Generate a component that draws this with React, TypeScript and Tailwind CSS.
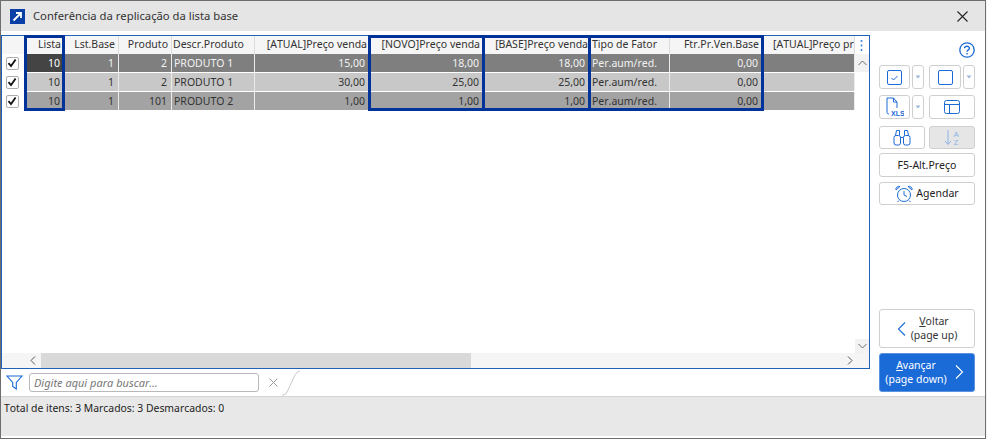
import React from "react";

const widths = "grid-cols-[23px_40px_54px_53px_83px_115px_114px_106px_80px_93px_92px]";

const headers: [string, string][] = [
  ["", ""],
  ["Lista", "justify-end pr-[3px]"],
  ["Lst.Base", "justify-end pr-[3px]"],
  ["Produto", "justify-end pr-[3px]"],
  ["Descr.Produto", "justify-start pl-[1px]"],
  ["[ATUAL]Preço venda", "justify-end pr-[2px]"],
  ["[NOVO]Preço venda", "justify-end pr-[3px]"],
  ["[BASE]Preço venda", "justify-end pr-[1px]"],
  ["Tipo de Fator", "justify-start pl-[2px]"],
  ["Ftr.Pr.Ven.Base", "justify-end pr-[3px]"],
  ["[ATUAL]Preço pr", "justify-start pl-[10px]"],
];

const rows = [
  { mt: "", bg: "bg-[#7f7f7f]", text: "text-[#f2f2f2]", v: ["10", "1", "2", "PRODUTO 1", "15,00", "18,00", "18,00", "Per.aum/red.", "0,00", ""] },
  { mt: "mt-[1px]", bg: "bg-[#c8c8c8]", text: "text-[#333333]", v: ["10", "1", "2", "PRODUTO 1", "30,00", "25,00", "25,00", "Per.aum/red.", "0,00", ""] },
  { mt: "mt-[1px]", bg: "bg-[#a3a3a3]", text: "text-[#333333]", v: ["10", "1", "101", "PRODUTO 2", "1,00", "1,00", "1,00", "Per.aum/red.", "0,00", ""] },
];

function Check() {
  return (
    <div className="w-[13px] h-[13px] rounded-[2px] border border-[#adadad] bg-white flex items-center justify-center">
      <svg width="10" height="10" viewBox="0 0 10 10" fill="none">
        <path d="M1.5 5.2 L4 8 L8.6 1.4" stroke="#111" strokeWidth="1.8" />
      </svg>
    </div>
  );
}

function Btn({ children, className = "" }: { children?: React.ReactNode; className?: string }) {
  return (
    <div className={"rounded-[3px] border border-[#cfcfcf] flex items-center justify-center " + className}>{children}</div>
  );
}

function Caret() {
  return (
    <Btn className="w-[12px] h-full">
      <svg width="6" height="4" viewBox="0 0 6 4"><path d="M0.5 0.5 L5.5 0.5 L3 3.5 Z" fill="#9db7d8" /></svg>
    </Btn>
  );
}

function Mark({ className }: { className: string }) {
  return <div className={"absolute border-[3px] border-[#003399] pointer-events-none " + className} />;
}

const blue = "#1a6ad8";

export default function App() {
  return (
    <div className="w-[987px] h-[439px] bg-[#f4f4f4] overflow-hidden font-['Noto_Sans',sans-serif] [font-kerning:none] text-[10.5px] leading-none text-[#333]">
      <div className="w-[986px] h-[439px] border border-[#6e6e6e] bg-white flex flex-col">
        {/* title bar */}
        <div className="h-[30px] bg-[#e5e5e5] flex items-center pl-[9px] pr-[17px] shrink-0">
          <div className="w-[15px] h-[15px] bg-[#0b3fa8] flex items-center justify-center">
            <svg width="11" height="11" viewBox="0 0 11 11" fill="none">
              <path d="M1.5 9.5 L8 3 M4 2 H9 V7" stroke="white" strokeWidth="1.8" />
            </svg>
          </div>
          <span className="ml-[8px] text-[11.25px] text-[#333]">Conferência da replicação da lista base</span>
          <svg className="ml-auto" width="11" height="11" viewBox="0 0 11 11" fill="none">
            <path d="M0.5 0.5 L10.5 10.5 M10.5 0.5 L0.5 10.5" stroke="#222" strokeWidth="1.1" />
          </svg>
        </div>

        {/* body */}
        <div className="flex-1 flex min-h-0 pt-[4px] relative">
          {/* left column */}
          <div className="w-[869px] shrink-0 flex flex-col">
            {/* grid */}
            <div className="h-[334px] border border-[#1f62b8] flex flex-col relative">
              <div className="flex-1 flex min-h-0">
                <div className="w-[853px] shrink-0 flex flex-col">
                  <div className={"grid h-[18px] " + widths}>
                    {headers.map(([label, align], i) => (
                      <div key={i} className={"bg-[#f5f5f5] border-r border-[#dcdcdc] flex items-center whitespace-nowrap overflow-hidden pb-[1px] " + align}>
                        {label}
                      </div>
                    ))}
                  </div>
                  {rows.map((r, ri) => (
                    <div key={ri} className={"grid h-[18px] " + r.mt + " " + widths}>
                      <div className="bg-white flex items-center justify-center pr-[3px]">
                        <Check />
                      </div>
                      {r.v.map((val, ci) => {
                        const leftAlign = ci === 3 || ci === 7 || ci === 9;
                        return (
                          <div
                            key={ci}
                            className={
                              "border-r border-[#ececec] flex items-center whitespace-nowrap overflow-hidden " +
                              (leftAlign ? "justify-start pl-[2px] " : "justify-end pr-[4px] ") +
                              (ri === 0 && ci === 0 ? "bg-[#444444] text-white " : r.bg + " " + r.text + " ")
                            }
                          >
                            {val}
                          </div>
                        );
                      })}
                    </div>
                  ))}
                </div>
                {/* vertical scrollbar */}
                <div className="flex-1 flex flex-col items-center">
                  <div className="h-[18px] w-full flex items-center justify-center pr-[1px]">
                    <svg width="3" height="11" viewBox="0 0 3 11"><path d="M1.5 0v2M1.5 4.5v2M1.5 9v2" stroke="#3d85e0" strokeWidth="1.6" /></svg>
                  </div>
                  <div className="w-full h-[18px] bg-[#f2f2f2] flex items-center justify-center">
                    <svg width="9" height="6" viewBox="0 0 9 6" fill="none"><path d="M0.5 5 L4.5 1 L8.5 5" stroke="#6d6d6d" /></svg>
                  </div>
                  <div className="flex-1 w-full bg-white" />
                  <div className="w-full h-[14px] bg-[#f2f2f2] flex items-center justify-center">
                    <svg width="9" height="6" viewBox="0 0 9 6" fill="none"><path d="M0.5 1 L4.5 5 L8.5 1" stroke="#6d6d6d" /></svg>
                  </div>
                </div>
              </div>
              {/* horizontal scrollbar */}
              <div className="h-[15px] bg-[#f5f5f5] flex items-center shrink-0">
                <div className="w-[39px] h-full flex items-center justify-end pr-[5px]">
                  <svg width="6" height="9" viewBox="0 0 6 9" fill="none"><path d="M5 0.5 L1 4.5 L5 8.5" stroke="#555" /></svg>
                </div>
                <div className="w-[430px] h-full bg-[#d9d9d9]" />
                <div className="flex-1" />
                <div className="w-[24px] flex items-center pl-[2px]">
                  <svg width="6" height="9" viewBox="0 0 6 9" fill="none"><path d="M1 0.5 L5 4.5 L1 8.5" stroke="#555" /></svg>
                </div>
              </div>
            </div>
            {/* search */}
            <div className="h-[27px] flex items-center pl-[5px] relative">
              <svg width="17" height="15" viewBox="0 0 17 15" fill="none">
                <path d="M1 1 H16 L10.3 7.5 V14 L6.7 11.5 V7.5 Z" stroke={blue} strokeWidth="1.1" />
              </svg>
              <div className="ml-[6px] w-[230px] h-[19px] rounded-[3px] border border-[#b9b9b9] flex items-center pl-[4px] italic text-[11px] text-[#777]">
                Digite aqui para buscar…
              </div>
              <svg className="ml-[10px]" width="9" height="9" viewBox="0 0 9 9" fill="none">
                <path d="M0.5 0.5 L8.5 8.5 M8.5 0.5 L0.5 8.5" stroke="#9a9a9a" />
              </svg>
              <svg className="ml-[4px]" width="18" height="26" viewBox="0 0 18 26" fill="none">
                <path d="M0 25 H1 Q4 25 5.5 21 L13 5 Q15 1 18 1" stroke="#c8c8c8" />
              </svg>
            </div>
          </div>

          {/* right column */}
          <div className="flex-1 flex flex-col pl-[9px] pr-[10px]">
            <div className="h-[30px] shrink-0 flex justify-end items-start pt-[7px]">
              <svg width="16" height="16" viewBox="0 0 16 16" fill="none" stroke={blue}>
                <circle cx="8" cy="8" r="7.2" strokeWidth="1.3" />
                <path d="M5.6 6.2 C5.6 3.6 10.4 3.6 10.4 6.2 C10.4 8 8 7.8 8 9.8" strokeWidth="1.4" />
                <path d="M8 11 V12.6" strokeWidth="1.4" />
              </svg>
            </div>
            <div className="flex h-[24px] gap-[2px]">
              <Btn className="w-[31px]">
                <svg width="15" height="15" viewBox="0 0 15 15" fill="none">
                  <rect x="0.5" y="0.5" width="14" height="14" rx="1.5" stroke={blue} />
                  <path d="M4.5 8 L6.5 10 L10.5 6" stroke={blue} />
                </svg>
              </Btn>
              <Caret />
              <Btn className="w-[32px] ml-[3px]">
                <svg width="15" height="15" viewBox="0 0 15 15" fill="none"><rect x="0.5" y="0.5" width="14" height="14" rx="1.5" stroke={blue} /></svg>
              </Btn>
              <Caret />
            </div>
            <div className="flex h-[24px] gap-[2px] mt-[6px]">
              <Btn className="w-[31px]">
                <svg width="18" height="20" viewBox="0 0 18 20" fill="none">
                  <path d="M1 14 V1 H7.5 L11 5 V11" stroke={blue} />
                  <path d="M7.5 1 V5 H11" stroke={blue} />
                  <path d="M1 14 V15.5 Q1 17 3 17" stroke={blue} />
                  <text x="5" y="19" fontSize="7" fontWeight="700" fill={blue} fontFamily="'Liberation Sans',sans-serif">XLS</text>
                </svg>
              </Btn>
              <Caret />
              <Btn className="flex-1 ml-[3px]">
                <svg width="16" height="14" viewBox="0 0 16 14" fill="none">
                  <rect x="0.5" y="0.5" width="15" height="13" rx="2" stroke={blue} />
                  <path d="M0.5 4.5 H15.5 M5.5 4.5 V13.5" stroke={blue} />
                </svg>
              </Btn>
            </div>
            <div className="flex h-[23px] gap-[4px] mt-[7px]">
              <Btn className="flex-1">
                <svg width="18" height="17" viewBox="0 0 18 17" fill="none" stroke={blue}>
                  <rect x="1" y="6.5" width="6.5" height="9.5" rx="2" />
                  <rect x="10.5" y="6.5" width="6.5" height="9.5" rx="2" />
                  <path d="M2.5 6.5 L3.5 1.5 H6.5 V6.5 M15.5 6.5 L14.5 1.5 H11.5 V6.5 M7.5 8.5 H10.5" />
                </svg>
              </Btn>
              <Btn className="flex-1 bg-[#e6e6e6]">
                <svg width="17" height="17" viewBox="0 0 17 17" fill="none">
                  <path d="M4 1 V15 M1 12 L4 15.5 L7 12" stroke="#8fb4e6" />
                  <text x="9.5" y="7.5" fontSize="8" fill="#8fb4e6" fontFamily="'Liberation Sans',sans-serif">A</text>
                  <text x="9.5" y="16" fontSize="8" fill="#8fb4e6" fontFamily="'Liberation Sans',sans-serif">Z</text>
                </svg>
              </Btn>
            </div>
            <Btn className="h-[24px] mt-[4px] text-[#222]">F5-Alt.Preço</Btn>
            <Btn className="h-[23px] mt-[5px] gap-[3px] text-[#222]">
              <svg width="18" height="18" viewBox="0 0 18 18" fill="none" stroke={blue}>
                <circle cx="9" cy="10" r="6.5" />
                <path d="M9 6 V10 L12 11.5" />
                <path d="M1 5 A3 3 0 0 1 5 1.5 Z M17 5 A3 3 0 0 0 13 1.5 Z M4 15.5 L2.5 17 M14 15.5 L15.5 17" />
              </svg>
              Agendar
            </Btn>
            <div className="flex-1" />
            <Btn className="h-[39px] relative pl-[14px] pb-[1px] flex-col text-center leading-[14px]">
              <svg className="absolute left-[17px] top-[12px]" width="9" height="14" viewBox="0 0 9 14" fill="none"><path d="M8 0.5 L1.5 7 L8 13.5" stroke={blue} strokeWidth="1.1" /></svg>
              <span><span className="underline">V</span>oltar</span>
              <span>(page up)</span>
            </Btn>
            <div className="h-[39px] mt-[5px] rounded-[3px] bg-[#1a6ad8] border border-[#5b93de] text-white relative flex flex-col items-center justify-center pr-[22px] pb-[1px] leading-[14px]">
              <svg className="absolute right-[10px] top-[11px]" width="9" height="14" viewBox="0 0 9 14" fill="none"><path d="M1 0.5 L7.5 7 L1 13.5" stroke="white" strokeWidth="1.1" /></svg>
              <span><span className="underline">A</span>vançar</span>
              <span>(page down)</span>
            </div>
            <div className="h-[4px]" />
          </div>

          {/* highlighted columns */}
          <Mark className="left-[23px] top-[4px] w-[41px] h-[76px]" />
          <Mark className="left-[367px] top-[4px] w-[117px] h-[76px]" />
          <Mark className="left-[481px] top-[4px] w-[109px] h-[76px]" />
          <Mark className="left-[587px] top-[4px] w-[176px] h-[76px]" />
        </div>

        {/* footer */}
        <div className="h-[42px] bg-[#e8e8e8] border-t border-t-[#d4d4d4] border-b-2 border-b-white shrink-0 pl-[3px] pt-[6px] text-[#222] text-[10.4px]">
          Total de itens: 3 Marcados: 3 Desmarcados: 0
        </div>
      </div>
    </div>
  );
}
